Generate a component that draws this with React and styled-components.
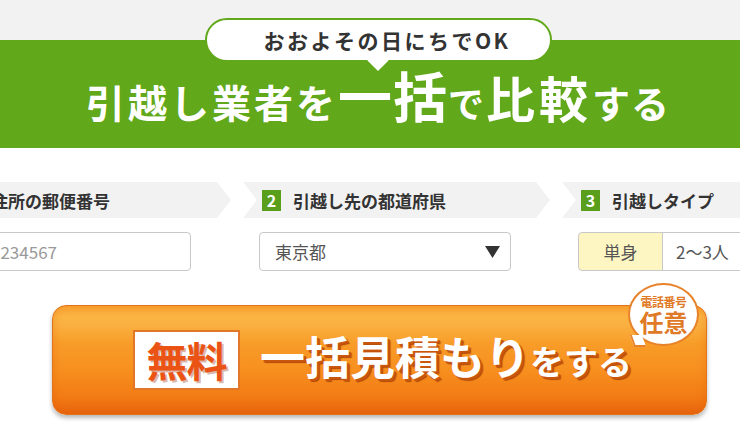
import React from 'react';
import styled, { createGlobalStyle } from 'styled-components';

const GlobalStyle = createGlobalStyle`
  html, body {
    margin: 0;
    padding: 0;
    background: #fff;
    overflow: hidden;
  }
  body {
    font-family: "Noto Sans CJK JP", "Noto Sans", sans-serif;
    color: #333;
  }
`;

const Page = styled.div`
  width: 740px;
  height: 439px;
  overflow: hidden;
`;

/* Hero */
const Hero = styled.header`
  height: 148px;
  box-sizing: border-box;
  padding: 18px 0 0 16px;
  background: linear-gradient(to bottom, #f2f2f2 0, #f2f2f2 40px, #61a81a 40px);
  display: flex;
  flex-direction: column;
  align-items: center;
`;

const Bubble = styled.div`
  position: relative;
  width: 347px;
  height: 44px;
  box-sizing: border-box;
  border: 2px solid #61a81a;
  border-radius: 22px;
  background: #fff;
  display: flex;
  align-items: center;
  justify-content: center;
  padding-left: 18px;
  font-size: 21px;
  font-weight: 700;
  color: #333;
  letter-spacing: 2.5px;

  &::after {
    content: '';
    position: absolute;
    left: 50%;
    bottom: -8px;
    width: 15px;
    height: 15px;
    background: #fff;
    transform: translateX(-50%) rotate(45deg);
  }
`;

const Headline = styled.h1`
  margin: 6px 0 0;
  color: #fff;
  font-weight: 700;
  font-size: 39px;
  line-height: 1;
  white-space: nowrap;
  display: flex;
  align-items: baseline;
`;

const Size = styled.span`
  font-size: ${p => p.$size}px;
  letter-spacing: ${p => p.$ls ?? 0}px;
`;

/* Steps */
const Steps = styled.div`
  display: grid;
  grid-template-columns: repeat(3, 307px);
  column-gap: 12px;
  margin: 34px 0 0 -76px;
`;

const StepHead = styled.div`
  height: 36px;
  background: #f2f2f2;
  display: flex;
  align-items: center;
  gap: 12px;
  padding-left: 19px;
  clip-path: ${p => p.$first
    ? 'polygon(0 0, calc(100% - 14px) 0, 100% 50%, calc(100% - 14px) 100%, 0 100%)'
    : 'polygon(0 0, calc(100% - 14px) 0, 100% 50%, calc(100% - 14px) 100%, 0 100%, 14px 50%)'};
`;

const StepNum = styled.span`
  width: 19px;
  height: 21px;
  background: #5a9f1b;
  color: #fff;
  font-size: 16px;
  font-weight: 700;
  display: flex;
  align-items: center;
  justify-content: center;
  line-height: 1;
`;

const StepLabel = styled.span`
  font-size: 17px;
  font-weight: 700;
  color: #333;
`;

const Field = styled.div`
  margin-top: 14px;
  padding-left: 16px;
  display: flex;
  align-items: center;
`;

const Postal = styled.span`
  width: 35px;
  font-size: 18px;
  color: #555;
`;

const Input = styled.input`
  width: ${p => p.$w}px;
  height: 39px;
  box-sizing: border-box;
  border: 1px solid #c8c8c8;
  border-radius: 4px;
  padding: 0 15px;
  font: 17px "Noto Sans CJK JP", sans-serif;
  color: #555;
  outline: none;

  &::placeholder {
    color: #999;
  }
`;

const SelectBox = styled.div`
  width: 252px;
  height: 39px;
  box-sizing: border-box;
  border: 1px solid #c8c8c8;
  border-radius: 4px;
  padding: 0 10px 0 15px;
  display: flex;
  align-items: center;
  justify-content: space-between;
  font-size: 17px;
  color: #555;
`;

const Segmented = styled.div`
  display: flex;
  height: 39px;
`;

const Segment = styled.div`
  width: ${p => p.$w}px;
  box-sizing: border-box;
  border: 1px solid #c8c8c8;
  margin-left: ${p => (p.$first ? 0 : -1)}px;
  border-radius: ${p => (p.$first ? '4px 0 0 4px' : '0')};
  background: ${p => (p.$active ? '#fdf6c2' : '#fff')};
  display: flex;
  align-items: center;
  justify-content: ${p => (p.$active ? 'center' : 'flex-start')};
  padding-left: ${p => (p.$active ? 0 : 13)}px;
  font-size: 17px;
  color: #555;
`;

/* CTA */
const Cta = styled.button`
  position: relative;
  margin: 34px 0 0 52px;
  width: 655px;
  height: 110px;
  box-sizing: border-box;
  border: 1px solid #e2741a;
  border-radius: 14px;
  background: linear-gradient(to bottom,
    #f8a030 0%, #fbb443 10%, #fab040 18%, #f89c28 35%,
    #f78f1e 60%, #f27a14 85%, #e9680f 100%);
  box-shadow: 0 3px 4px rgba(0, 0, 0, 0.28), inset 0 -4px 8px rgba(225, 90, 10, 0.35);
  display: flex;
  align-items: center;
  justify-content: center;
  gap: 20px;
  padding: 0 0 0 6px;
  cursor: pointer;
  font-family: "Noto Sans CJK JP", sans-serif;
`;

const FreeTag = styled.span`
  width: 107px;
  height: 60px;
  box-sizing: border-box;
  background: #fff;
  border: 2px solid #e2772a;
  display: flex;
  align-items: center;
  justify-content: center;
  padding-bottom: 3px;
  font-size: 41px;
  font-weight: 700;
  color: #eb5314;
  text-shadow: 2px 2px 0 rgba(150, 50, 10, 0.35);
  letter-spacing: -1px;
`;

const CtaText = styled.span`
  display: flex;
  align-items: baseline;
  padding-bottom: 10px;
  color: #fff;
  font-weight: 700;
  line-height: 1;
  text-shadow: 2px 2px 0 #c9560d, 3px 3px 1px #b14a0a;
  white-space: nowrap;
`;

const Badge = styled.span`
  position: absolute;
  right: 7px;
  top: -23px;
  width: 71px;
  height: 63px;
  box-sizing: border-box;
  border: 2px solid #e8822a;
  border-radius: 50%;
  background: #fff;
  display: flex;
  flex-direction: column;
  align-items: center;
  justify-content: center;
  color: #e07a26;
  font-weight: 700;

  &::after {
    content: '';
    position: absolute;
    left: 2px;
    bottom: -3px;
    width: 10px;
    height: 10px;
    background: #fff;
    border-left: 2px solid #e8822a;
    border-bottom: 2px solid #e8822a;
    transform: skewX(20deg);
  }
`;

const BadgeSmall = styled.span`
  font-size: 12px;
  line-height: 14px;
  letter-spacing: -0.5px;
`;

const BadgeBig = styled.span`
  font-size: 24px;
  line-height: 26px;
`;

const ArrowDown = () => (
  <svg width="15" height="12" viewBox="0 0 15 12">
    <path d="M0 0 H15 L7.5 12 Z" fill="#333" />
  </svg>
);

export default function App() {
  return (
    <Page>
      <GlobalStyle />
      <Hero>
        <Bubble>おおよその日にちでOK</Bubble>
        <Headline>
          <Size $size={39} $ls={3}>引越し業者を</Size>
          <Size $size={54} $ls={1}>一括</Size>
          <Size $size={36} $ls={2}>で</Size>
          <Size $size={49} $ls={4}>比較</Size>
          <Size $size={38} $ls={1}>する</Size>
        </Headline>
      </Hero>

      <Steps>
        <div>
          <StepHead $first>
            <StepNum>1</StepNum>
            <StepLabel>現住所の郵便番号</StepLabel>
          </StepHead>
          <Field>
            <Postal>〒</Postal>
            <Input $w={216} placeholder="1234567" />
          </Field>
        </div>
        <div>
          <StepHead>
            <StepNum>2</StepNum>
            <StepLabel>引越し先の都道府県</StepLabel>
          </StepHead>
          <Field>
            <SelectBox>
              東京都
              <ArrowDown />
            </SelectBox>
          </Field>
        </div>
        <div>
          <StepHead>
            <StepNum>3</StepNum>
            <StepLabel>引越しタイプ</StepLabel>
          </StepHead>
          <Field>
            <Segmented>
              <Segment $first $active $w={85}>単身</Segment>
              <Segment $w={84}>2〜3人</Segment>
              <Segment $w={85}>4人以上</Segment>
            </Segmented>
          </Field>
        </div>
      </Steps>

      <Cta type="button">
        <FreeTag>無料</FreeTag>
        <CtaText>
          <Size $size={45}>一括見積もり</Size>
          <Size $size={34}>をする</Size>
        </CtaText>
        <Badge>
          <BadgeSmall>電話番号</BadgeSmall>
          <BadgeBig>任意</BadgeBig>
        </Badge>
      </Cta>
    </Page>
  );
}
